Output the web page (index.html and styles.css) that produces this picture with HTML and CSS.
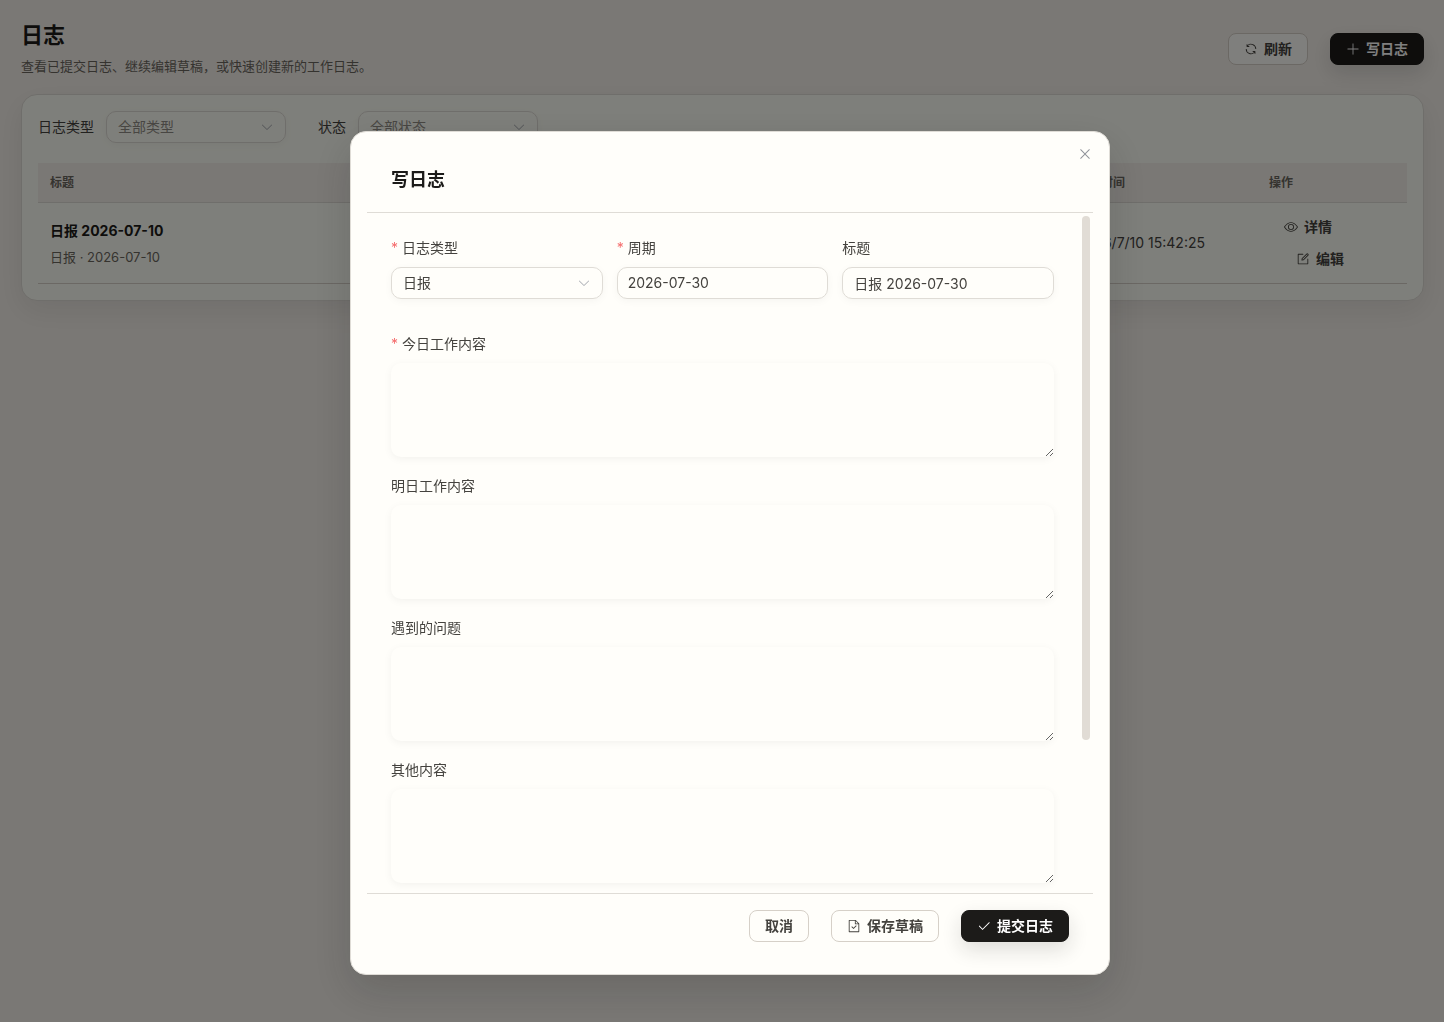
FILE: index.html
```html
<!DOCTYPE html>
<html lang="zh-CN">
<head>
<meta charset="utf-8">
<meta name="viewport" content="width=device-width, initial-scale=1">
<title>日志</title>
<link rel="stylesheet" href="styles.css">
</head>
<body>
<svg class="sprite" aria-hidden="true">
  <symbol id="refresh" viewBox="0 0 1024 1024"><path d="M771.776 794.88A384 384 0 0 1 128 512h64a320 320 0 0 0 555.712 216.448H654.72a32 32 0 1 1 0-64h149.056a32 32 0 0 1 32 32v148.928a32 32 0 1 1-64 0v-50.56zM276.288 295.616h92.992a32 32 0 0 1 0 64H220.16a32 32 0 0 1-32-32V178.56a32 32 0 0 1 64 0v50.56A384 384 0 0 1 896.128 512h-64a320 320 0 0 0-555.776-216.384z"/></symbol>
  <symbol id="plus" viewBox="0 0 1024 1024"><path d="M480 480V128a32 32 0 0 1 64 0v352h352a32 32 0 1 1 0 64H544v352a32 32 0 1 1-64 0V544H128a32 32 0 0 1 0-64z"/></symbol>
  <symbol id="view" viewBox="0 0 1024 1024"><path d="M512 160c320 0 512 352 512 352S832 864 512 864 0 512 0 512s192-352 512-352m0 64c-225.28 0-384.128 208.064-436.8 288 52.608 79.872 211.456 288 436.8 288 225.28 0 384.128-208.064 436.8-288-52.608-79.872-211.456-288-436.8-288m0 64a224 224 0 1 1 0 448 224 224 0 0 1 0-448m0 64a160.192 160.192 0 0 0-160 160c0 88.192 71.744 160 160 160s160-71.808 160-160-71.744-160-160-160"/></symbol>
  <symbol id="edit" viewBox="0 0 1024 1024"><path d="M832 512a32 32 0 1 1 64 0v352a32 32 0 0 1-32 32H160a32 32 0 0 1-32-32V160a32 32 0 0 1 32-32h352a32 32 0 0 1 0 64H192v640h640z"/><path d="m469.952 554.24 52.8-7.552L847.104 222.4a32 32 0 1 0-45.248-45.248L477.44 501.44l-7.552 52.8zm422.4-422.4a96 96 0 0 1 0 135.808l-331.84 331.84a32 32 0 0 1-18.112 9.088L436.8 623.68a32 32 0 0 1-36.224-36.224l15.104-105.6a32 32 0 0 1 9.024-18.112l331.904-331.84a96 96 0 0 1 135.744 0z"/></symbol>
  <symbol id="arrow-down" viewBox="0 0 1024 1024"><path d="M831.872 340.864 512 652.672 192.128 340.864a30.592 30.592 0 0 0-42.752 0 29.12 29.12 0 0 0 0 41.6L489.664 714.24a32 32 0 0 0 44.672 0l340.288-331.712a29.12 29.12 0 0 0 0-41.728 30.592 30.592 0 0 0-42.752 0z"/></symbol>
  <symbol id="close" viewBox="0 0 1024 1024"><path d="M764.288 214.592 512 466.88 259.712 214.592a31.936 31.936 0 0 0-45.12 45.12L466.752 512 214.528 764.224a31.936 31.936 0 1 0 45.12 45.184L512 557.184l252.288 252.288a31.936 31.936 0 0 0 45.12-45.12L557.12 512.064l252.288-252.352a31.936 31.936 0 1 0-45.12-45.184z"/></symbol>
  <symbol id="check" viewBox="0 0 1024 1024"><path d="M406.656 706.944 195.84 496.256a32 32 0 1 0-45.248 45.248l256 256 512-512a32 32 0 0 0-45.248-45.248L406.592 706.944z"/></symbol>
  <symbol id="document-checked" viewBox="0 0 1024 1024"><path d="M805.504 320 640 154.496V320zM832 384H576V128H192v768h640zM160 64h480l256 256v608a32 32 0 0 1-32 32H160a32 32 0 0 1-32-32V96a32 32 0 0 1 32-32m318.4 582.144 180.992-180.992L704.64 510.4 478.4 736.64 320 578.304l45.248-45.312z"/></symbol>
</svg>

<main class="page">
  <header class="page-header">
    <div class="page-heading">
      <h1>日志</h1>
      <p>查看已提交日志、继续编辑草稿，或快速创建新的工作日志。</p>
    </div>
    <div class="actions">
      <button type="button" class="btn"><svg class="icon"><use href="#refresh"/></svg>刷新</button>
      <button type="button" class="btn btn-primary"><svg class="icon"><use href="#plus"/></svg>写日志</button>
    </div>
  </header>

  <section class="card">
    <div class="filters">
      <div class="filter">
        <label for="filter-type">日志类型</label>
        <div class="select placeholder">
          <select id="filter-type"><option>全部类型</option></select>
          <svg class="icon"><use href="#arrow-down"/></svg>
        </div>
      </div>
      <div class="filter">
        <label for="filter-status">状态</label>
        <div class="select placeholder">
          <select id="filter-status"><option>全部状态</option></select>
          <svg class="icon"><use href="#arrow-down"/></svg>
        </div>
      </div>
    </div>
    <table class="logs">
      <thead>
        <tr><th>标题</th><th class="col-time">提交时间</th><th class="col-ops">操作</th></tr>
      </thead>
      <tbody>
        <tr>
          <td>
            <div class="log-title">日报 2026-07-10</div>
            <div class="log-sub">日报 · 2026-07-10</div>
          </td>
          <td>2026/7/10 15:42:25</td>
          <td>
            <div class="ops">
              <button type="button" class="btn btn-text"><svg class="icon"><use href="#view"/></svg>详情</button>
              <button type="button" class="btn btn-text"><svg class="icon"><use href="#edit"/></svg>编辑</button>
            </div>
          </td>
        </tr>
      </tbody>
    </table>
  </section>
</main>

<div class="overlay">
  <form class="dialog" role="dialog" aria-modal="true" aria-labelledby="dialog-title">
    <button type="button" class="dialog-close" aria-label="关闭"><svg class="icon"><use href="#close"/></svg></button>
    <header class="dialog-header"><h2 id="dialog-title">写日志</h2></header>
    <div class="scroll-area">
      <div class="dialog-body">
        <div class="field-row">
          <div class="field">
            <label class="required" for="log-type">日志类型</label>
            <div class="select">
              <select id="log-type"><option>日报</option></select>
              <svg class="icon"><use href="#arrow-down"/></svg>
            </div>
          </div>
          <div class="field">
            <label class="required" for="log-period">周期</label>
            <input id="log-period" class="input input-date" type="text" value="2026-07-30">
          </div>
          <div class="field">
            <label for="log-name">标题</label>
            <input id="log-name" class="input" type="text" value="日报 2026-07-30">
          </div>
        </div>
        <div class="field">
          <label class="required" for="today">今日工作内容</label>
          <textarea id="today"></textarea>
        </div>
        <div class="field">
          <label for="tomorrow">明日工作内容</label>
          <textarea id="tomorrow"></textarea>
        </div>
        <div class="field">
          <label for="problems">遇到的问题</label>
          <textarea id="problems"></textarea>
        </div>
        <div class="field">
          <label for="others">其他内容</label>
          <textarea id="others"></textarea>
        </div>
      </div>
      <div class="scroll-thumb"></div>
    </div>
    <footer class="dialog-footer">
      <button type="button" class="btn">取消</button>
      <button type="button" class="btn"><svg class="icon"><use href="#document-checked"/></svg>保存草稿</button>
      <button type="submit" class="btn btn-primary"><svg class="icon"><use href="#check"/></svg>提交日志</button>
    </footer>
  </form>
</div>
</body>
</html>
```
FILE: styles.css
```css
:root {
  --surface: #fffefa;
  --line: #dfdcd6;
  --ink: #1c1b19;
  --text: #44423e;
  --muted: #6b675f;
}

* { box-sizing: border-box; }

body {
  margin: 0;
  min-height: 100vh;
  background: #f5f1eb;
  color: var(--text);
  font: 14px/22px Inter, "Noto Sans CJK SC", sans-serif;
}

h1, h2, p { margin: 0; }
button, input, select, textarea { font: inherit; color: inherit; }

.sprite { display: none; }
.icon { width: 14px; height: 14px; flex: none; fill: currentColor; }

.page { padding: 20px 20px 20px 21px; }

.page-header {
  display: flex;
  align-items: center;
  justify-content: space-between;
  margin-bottom: 16px;
}
.page-heading { display: grid; gap: 6px; }
h1 { color: var(--ink); font-size: 22px; line-height: 30px; font-weight: 700; }
.page-heading p { padding-bottom: 2px; color: var(--muted); font-size: 13px; line-height: 20px; }

.actions { display: flex; gap: 22px; }

.btn {
  display: inline-flex;
  align-items: center;
  justify-content: center;
  gap: 6px;
  height: 32px;
  padding: 0 15px;
  border: 1px solid #d6d0c8;
  border-radius: 8px;
  background: var(--surface);
  color: var(--text);
  font-weight: 600;
  line-height: 14px;
  white-space: nowrap;
}
.btn-primary {
  border-color: var(--ink);
  background: var(--ink);
  color: #fff;
  box-shadow: 0 8px 20px rgba(28, 27, 25, .14);
}
.btn-text { border: 0; background: none; }

.card {
  padding: 16px;
  border: 1px solid var(--line);
  border-radius: 16px;
  background: #fdfff6;
  box-shadow: 0 10px 28px rgba(28, 27, 25, .08);
}

.filters { display: flex; gap: 32px; margin-bottom: 20px; }
.filter { display: flex; align-items: center; gap: 12px; }
.filter .select { width: 180px; }

.select { position: relative; }
.select select, .input {
  display: block;
  width: 100%;
  height: 32px;
  padding: 0 11px 1px;
  border: 1px solid var(--line);
  border-radius: 10px;
  background: transparent;
  box-shadow: 0 2px 8px rgba(28, 27, 25, .04);
  outline: 0;
  appearance: none;
}
.input-date { padding: 0 10px 1px; }
.select .icon {
  position: absolute;
  top: 9px;
  right: 12px;
  color: #a8abb2;
  pointer-events: none;
}
.placeholder select { color: #918d86; }

.logs { width: 100%; border-collapse: separate; border-spacing: 0; table-layout: fixed; }
.logs th {
  height: 40px;
  padding: 0 12px;
  border-bottom: 1px solid var(--line);
  background: #f5f1eb;
  color: var(--muted);
  font-size: 12px;
  font-weight: 600;
  text-align: left;
}
.logs td { padding: 8px 12px; border-bottom: 1px solid #d6d0c8; }
.col-time { width: 192px; }
.col-ops { width: 150px; }
.log-title { padding-top: 2px; margin-bottom: 4px; color: var(--ink); font-weight: 700; }
.log-sub { color: var(--muted); font-size: 13px; }
.ops { display: flex; flex-direction: column; align-items: flex-start; }
.ops .btn + .btn { margin-left: 12px; }

.overlay {
  position: fixed;
  inset: 0;
  padding: 131px 0 40px 16px;
  overflow: auto;
  background: rgba(0, 0, 0, .5);
}

.dialog {
  position: relative;
  width: 100%;
  max-width: 760px;
  margin: 0 auto;
  padding: 16px;
  border: 1px solid var(--line);
  border-radius: 16px;
  background: var(--surface);
  box-shadow: 0 16px 40px rgba(28, 27, 25, .18);
}
.dialog-header { padding: 18px 24px; border-bottom: 1px solid var(--line); }
h2 { color: var(--ink); font-size: 18px; line-height: 28px; font-weight: 700; }
.dialog-close {
  position: absolute;
  top: 14px;
  right: 16px;
  display: flex;
  padding: 0;
  border: 0;
  background: none;
  color: #909399;
}
.dialog-close .icon { width: 16px; height: 16px; }

.scroll-area { position: relative; }
.dialog-body {
  max-height: calc(100vh - 342px);
  padding: 24px 39px 184px 24px;
  overflow-y: auto;
  scrollbar-width: none;
}
.scroll-thumb {
  position: absolute;
  top: 3px;
  right: 3px;
  width: 8px;
  height: 77%;
  border-radius: 4px;
  background: #e1dcd5;
}

.field-row {
  display: grid;
  grid-template-columns: repeat(3, 1fr);
  gap: 14px;
  margin-bottom: 16px;
}
.field { margin-bottom: 18px; }
.field label { display: block; margin-bottom: 8px; }
.required::before { content: "*"; margin-right: 4px; color: #f56c6c; }

textarea {
  display: block;
  width: 100%;
  height: 94px;
  padding: 5px 11px;
  border: 0;
  border-radius: 10px;
  background: var(--surface);
  box-shadow: 0 2px 8px rgba(28, 27, 25, .05);
  outline: 0;
  resize: vertical;
}

.dialog-footer {
  display: flex;
  justify-content: flex-end;
  gap: 22px;
  padding: 16px 24px;
  border-top: 1px solid var(--line);
}
```
